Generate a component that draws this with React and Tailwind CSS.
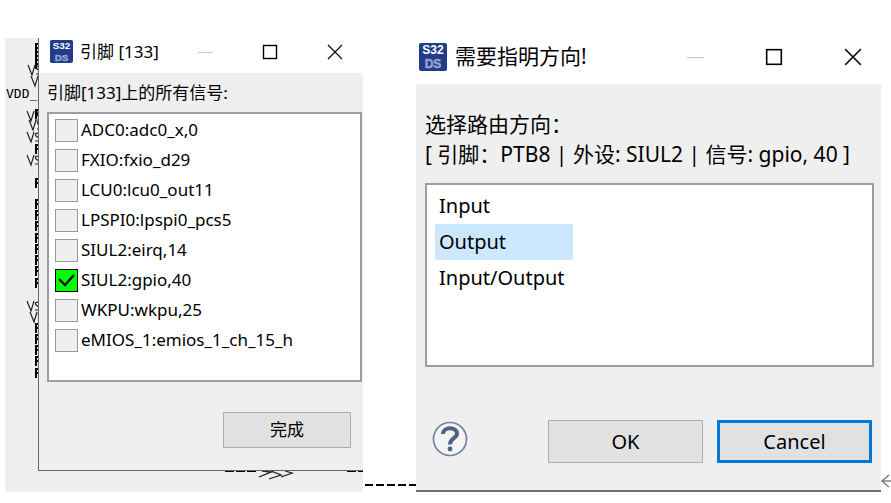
import React, { useState } from "react";

const SIGNALS = [
  "ADC0:adc0_x,0",
  "FXIO:fxio_d29",
  "LCU0:lcu0_out11",
  "LPSPI0:lpspi0_pcs5",
  "SIUL2:eirq,14",
  "SIUL2:gpio,40",
  "WKPU:wkpu,25",
  "eMIOS_1:emios_1_ch_15_h",
];

const DIRECTIONS = ["Input", "Output", "Input/Output"];

// x, y of each supply label on the package drawing behind the dialog
const SUPPLY_PINS = [
  [23, 32],
  [26, 43],
  [22, 78],
  [24, 87],
  [22, 99],
  [22, 122],
  [22, 268],
  [25, 279],
];
const PORT_PINS = [
  5, 13, 21, 71, 106, 140, 161, 172, 183, 195, 206, 217, 228, 240, 285, 296, 307,
  318, 330,
];

function AppIcon({ className }) {
  return (
    <svg
      viewBox="0 0 28 28"
      className={className}
      fontFamily="Liberation Sans, sans-serif"
      fontWeight="bold"
      textAnchor="middle"
      aria-hidden="true"
    >
      <rect width="28" height="28" rx="2" fill="#213c8c" />
      <text x="14" y="11" fontSize="12" fill="#fff">
        S32
      </text>
      <text x="14" y="25" fontSize="12" fill="#97a5d0" stroke="#97a5d0" strokeWidth="0.5">
        DS
      </text>
    </svg>
  );
}

function WindowButtons({ small }) {
  const size = small ? "w-4 h-4" : "w-[18px] h-[18px]";
  return (
    <div className={`flex items-center ${small ? "gap-[49px] mr-5" : "gap-[61px] mr-[19px]"}`}>
      <button type="button" aria-label="Minimize" disabled>
        <svg viewBox="0 0 16 16" className={size} stroke="#c8c8c8">
          <path d="M1 8.5H16" />
        </svg>
      </button>
      <button type="button" aria-label="Maximize">
        <svg viewBox="0 0 16 16" className={size} fill="none" stroke="#000" strokeWidth="1.4">
          <rect x="1.5" y="1.5" width="13" height="13" />
        </svg>
      </button>
      <button type="button" aria-label="Close">
        <svg viewBox="0 0 16 16" className={size} stroke="#111" strokeWidth="1.3">
          <path d="M1 1L15 15M15 1L1 15" />
        </svg>
      </button>
    </div>
  );
}

function PackageDrawing() {
  return (
    <svg width="33" height="454" className="shrink-0" fontFamily="DejaVu Sans Mono, monospace" aria-hidden="true">
      <text x="1" y="60" fontSize="13">
        VDD_
      </text>
      {SUPPLY_PINS.map(([x, y]) => (
        <path
          key={y}
          d={`M${x} ${y - 5}L${x + 4} ${y + 5}L${x + 7} ${y - 5}M${x + 12} ${y - 4}Q${x + 7} ${y - 4} ${x + 9} ${y - 1}L${x + 12} ${y + 1}M${x + 8} ${y + 4}H${x + 12}`}
          fill="none"
          stroke="#222"
          strokeWidth="1.2"
        />
      ))}
      {PORT_PINS.map((y) => (
        <path key={y} d={`M34 ${y + 1}H31V${y + 10}M31 ${y + 5}H34`} fill="none" stroke="#000" strokeWidth="2" />
      ))}
    </svg>
  );
}

function PinDialog() {
  const [checked, setChecked] = useState(["SIUL2:gpio,40"]);

  const toggle = (name) => {
    setChecked(
      checked.includes(name)
        ? checked.filter((item) => item !== name)
        : [...checked, name]
    );
  };

  return (
    <div className="mt-[38px] bg-[#efefef] flex overflow-hidden">
      <PackageDrawing />
      <div className="flex-1 min-w-0">
        <section className="border-l border-b border-[#666] text-[17px]">
          <header className="bg-white h-[35px] flex items-center justify-between pb-2">
            <h1 className="flex items-center gap-[7px] pl-[11px]">
              <AppIcon className="w-[23px] h-[23px]" />
              引脚 [133]
            </h1>
            <WindowButtons small />
          </header>
          <div className="pl-2">
            <p className="h-[39px] flex items-center">引脚[133]上的所有信号:</p>
            <ul className="bg-white border-2 border-[#989ea6] h-[270px] mr-px pt-px pl-[6px]">
              {SIGNALS.map((name) => (
                <li key={name} className="h-[30px]">
                  <label className="h-full flex items-center gap-[3px] whitespace-nowrap">
                    <span className="relative flex w-[23px] h-[23px]">
                      <input
                        type="checkbox"
                        checked={checked.includes(name)}
                        onChange={() => toggle(name)}
                        className="appearance-none w-[23px] h-[23px] bg-[#efefef] border border-[#999] checked:bg-[#00ff00] checked:border-black"
                      />
                      {checked.includes(name) && (
                        <svg
                          viewBox="0 0 23 23"
                          className="absolute inset-0 pointer-events-none"
                          fill="none"
                          stroke="#111"
                          strokeWidth="2.4"
                        >
                          <path d="M4 10L10 16L19 6" />
                        </svg>
                      )}
                    </span>
                    {name}
                  </label>
                </li>
              ))}
            </ul>
            <div className="flex justify-end pt-[30px] pb-[22px] pr-3">
              <button type="button" className="w-32 h-9 bg-[#e1e1e1] border border-[#adadad]">
                完成
              </button>
            </div>
          </div>
        </section>
        <svg width="100%" height="20" className="block" fill="none" stroke="#222" aria-hidden="true">
          <path d="M187 0H220M309 0H326" stroke="#000" strokeWidth="2" strokeDasharray="9 2" />
          <path d="M221 6L233 1L224 0M231 8L243 4L233 0M243 6L254 2L247 0" strokeWidth="1.3" />
        </svg>
      </div>
    </div>
  );
}

function DirectionDialog() {
  const [selected, setSelected] = useState("Output");

  return (
    <section className="mt-[30px] text-[21px]">
      <header className="bg-white h-[54px] flex items-center justify-between">
        <h1 className="flex items-center gap-2 pl-[3px]">
          <AppIcon className="w-7 h-7" />
          需要指明方向!
        </h1>
        <WindowButtons />
      </header>
      <div className="bg-[#efefef] border-b-2 border-[#6e6e6e] pt-[25px] pb-[27px] pl-[9px] pr-[7px]">
        <p className="leading-[30px] whitespace-nowrap">
          选择路由方向：
          <br />[ 引脚：PTB8 | 外设: SIUL2 | 信号: gpio, 40 ]
        </p>
        <ul
          role="listbox"
          className="mt-[14px] bg-white border-2 border-[#989ea6] h-[184px] pt-[3px] pl-2 text-xl"
        >
          {DIRECTIONS.map((name) => (
            <li key={name} role="option" aria-selected={selected === name}>
              <button
                type="button"
                onClick={() => setSelected(name)}
                className={`w-[138px] h-9 pl-1 text-left whitespace-nowrap ${
                  selected === name ? "bg-[#cce8ff]" : ""
                }`}
              >
                {name}
              </button>
            </li>
          ))}
        </ul>
        <div className="flex items-center justify-between mt-[53px] pl-[7px] pr-[2px] text-xl">
          <button type="button" aria-label="Help" className="mb-[5px]">
            <svg viewBox="0 0 36 36" className="w-9 h-9" fill="none" stroke="#4f6285">
              <circle cx="18" cy="18" r="16.5" fill="#f4f4f4" stroke="#74849f" strokeWidth="1.7" />
              <path d="M11 13C11 5.5 25 5.5 25 12.500C25 17.500 18 17 18 23.500" strokeWidth="4" />
              <circle cx="18" cy="28" r="2.400" fill="#4f6285" stroke="none" />
            </svg>
          </button>
          <div className="flex gap-[14px]">
            <button type="button" className="w-[155px] h-[43px] bg-[#e1e1e1] border border-[#adadad]">
              OK
            </button>
            <button type="button" className="w-[155px] h-[43px] bg-[#e1e1e1] border-3 border-[#0078d7]">
              Cancel
            </button>
          </div>
        </div>
      </div>
    </section>
  );
}

export default function App() {
  return (
    <main className="bg-white text-black pl-[5px] grid grid-cols-[358fr_53px_465fr_10px] items-start font-['Noto_Sans','Noto_Sans_CJK_SC',sans-serif]">
      <PinDialog />
      <svg width="53" height="2" className="mt-[484px]" stroke="#000" strokeWidth="2" aria-hidden="true">
        <path d="M2 1H53" strokeDasharray="8 3" />
      </svg>
      <DirectionDialog />
      <svg viewBox="0 0 10 16" className="mt-[473px] w-[10px] h-4" fill="none" stroke="#808080" strokeWidth="1.5" aria-hidden="true">
        <path d="M10 8H1M8 2L1 8L8 14" />
      </svg>
    </main>
  );
}
